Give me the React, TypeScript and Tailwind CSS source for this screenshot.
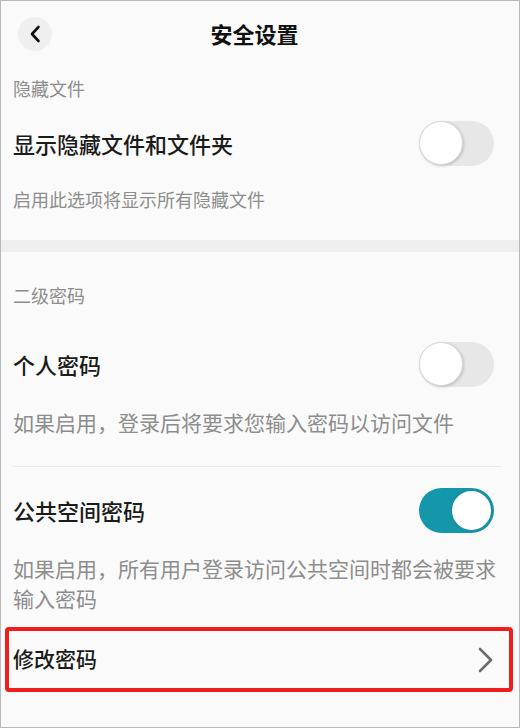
import { memo } from "react";

const FONT = { fontFamily: '"Noto Sans CJK SC", "Noto Sans", sans-serif' };

interface ToggleProps {
  on?: boolean;
}

const Toggle = memo(function Toggle({ on }: ToggleProps) {
  if (on) {
    return (
      <div className="w-[75px] h-[45px] rounded-full bg-[#1597ab] flex items-center justify-end shrink-0">
        <div className="w-[43px] h-[43px] mr-px rounded-full bg-white border-2 border-[#1a8fa1]" />
      </div>
    );
  }
  return (
    <div className="w-[75px] h-[45px] rounded-full bg-[#e7e7e7] flex items-center shrink-0">
      <div className="w-[44px] h-[44px] rounded-full bg-white border border-[#d9d9d9] shadow-[1px_1px_3px_rgba(0,0,0,0.18)]" />
    </div>
  );
});

interface ToggleRowProps {
  title: string;
  on?: boolean;
}

const ToggleRow = memo(function ToggleRow({ title, on }: ToggleRowProps) {
  return (
    <div className="h-[60px] flex items-center justify-between">
      <span className="text-[22px] font-medium text-[#1b1b1b] pt-[1px]">{title}</span>
      <div className="mr-[13px]">
        <Toggle on={on} />
      </div>
    </div>
  );
});

export default function App() {
  return (
    <div
      className="w-[520px] h-[728px] border border-[#b9b9b9] bg-[#fafafa] flex flex-col overflow-hidden"
      style={FONT}
    >
      {/* header */}
      <div className="h-[66px] flex items-center pl-[17px] pr-[62px]">
        <div className="w-[34px] h-[34px] rounded-full bg-[#efefef] flex items-center justify-center">
          <svg width="14" height="18" viewBox="0 0 14 18" fill="none">
            <path d="M10.5 2 L4 9 L10.5 16" stroke="#111" strokeWidth="2.6" strokeLinecap="round" strokeLinejoin="round" />
          </svg>
        </div>
        <h1 className="flex-1 text-center text-[22px] font-bold text-[#111] pb-[1px]">安全设置</h1>
      </div>

      {/* hidden files */}
      <div className="px-[12px]">
        <p className="mt-[9px] text-[18px] leading-[24px] text-[#8d8d8d]">隐藏文件</p>
        <div className="mt-[13px]">
          <ToggleRow title="显示隐藏文件和文件夹" />
        </div>
        <p className="mt-[14px] text-[18px] leading-[24px] text-[#8d8d8d]">启用此选项将显示所有隐藏文件</p>
      </div>

      <div className="mt-[29px] h-[12px] bg-[#efefef]" />

      {/* secondary password */}
      <div className="px-[12px]">
        <p className="mt-[31px] text-[18px] leading-[24px] text-[#8d8d8d]">二级密码</p>
        <div className="mt-[27px]">
          <ToggleRow title="个人密码" />
        </div>
        <p className="mt-[13px] text-[21px] leading-[30px] text-[#8d8d8d]">
          如果启用，登录后将要求您输入密码以访问文件
        </p>
        <div className="mt-[29px] mr-[6px] h-px bg-[#ebebeb]" />
        <div className="mt-[13px]">
          <ToggleRow title="公共空间密码" on />
        </div>
        <p className="mt-[13px] text-[21px] leading-[30px] text-[#8d8d8d]">
          如果启用，所有用户登录访问公共空间时都会被要求输入密码
        </p>
      </div>

      {/* change password */}
      <div className="mt-[14px] ml-[4px] mr-[6px] h-[65px] border-[4px] border-[#f01d1d] rounded-[4px] flex items-center justify-between pl-[4px] pr-[15px]">
        <span className="text-[21px] font-medium text-[#1b1b1b] pb-[1px]">修改密码</span>
        <svg width="18" height="26" viewBox="0 0 18 26" fill="none">
          <path d="M4 2 L15 13 L4 24" stroke="#6b6b6b" strokeWidth="2.6" strokeLinecap="round" strokeLinejoin="round" />
        </svg>
      </div>
    </div>
  );
}
